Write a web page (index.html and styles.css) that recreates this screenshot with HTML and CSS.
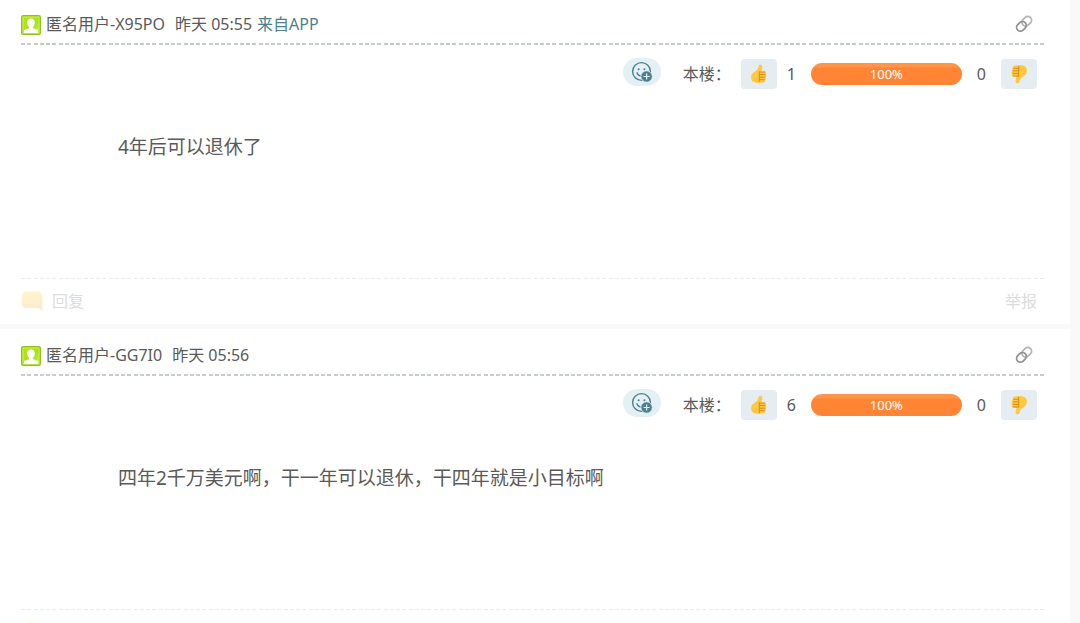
FILE: index.html
```html
<!DOCTYPE html>
<html lang="zh-CN">
<head>
    <meta charset="UTF-8">
    <title>论坛回帖</title>
    <link rel="stylesheet" href="styles.css">
</head>
<body>

    <!-- shared icons -->
    <svg class="sprite" aria-hidden="true">
        <defs>
            <linearGradient id="avatarBg" x1="0" y1="0" x2="1" y2="1">
                <stop offset="0" stop-color="#b9e51c"/>
                <stop offset="0.55" stop-color="#a8e310"/>
                <stop offset="1" stop-color="#c8f45a"/>
            </linearGradient>
            <linearGradient id="bubbleBg" x1="0" y1="0" x2="0" y2="1">
                <stop offset="0" stop-color="#fff4cc"/>
                <stop offset="1" stop-color="#fdebd2"/>
            </linearGradient>
            <symbol id="icon-avatar" viewBox="0 0 20 20">
                <rect x="0.75" y="0.75" width="18.5" height="18.5" rx="1.5" fill="url(#avatarBg)" stroke="#8fc31a" stroke-width="1.5"/>
                <rect x="2" y="2" width="16" height="16" fill="none" stroke="#d2f36a" stroke-width="0.8"/>
                <path d="M10 3.6c2.5 0 3.9 1.7 3.9 4.1 0 1.8-.9 3-1.8 4v1.5l4.9 1.9V18H3v-2.9l4.9-1.9v-1.5c-.9-1-1.8-2.2-1.8-4 0-2.4 1.4-4.1 3.9-4.1z" fill="#fff"/>
            </symbol>
            <symbol id="icon-link" viewBox="0 0 18 18">
                <g fill="none" stroke-width="1.8">
                    <rect x="6.5" y="2.5" width="10.5" height="7.6" rx="3.8" transform="rotate(-45 11.7 6.3)" stroke="#b5b5b5"/>
                    <rect x="1.2" y="7.6" width="10.5" height="7.6" rx="3.8" transform="rotate(-45 6.4 11.4)" stroke="#929292"/>
                </g>
            </symbol>
            <symbol id="icon-smile" viewBox="0 0 22 22">
                <circle cx="10.5" cy="10.5" r="8.9" fill="none" stroke="#4b818c" stroke-width="1.4"/>
                <circle cx="7.6" cy="8.2" r="1" fill="#4b818c"/>
                <circle cx="13.4" cy="8.2" r="1" fill="#4b818c"/>
                <path d="M6 11.8c.7 2 2.4 3.3 4.5 3.3" fill="none" stroke="#4b818c" stroke-width="1.4" stroke-linecap="round"/>
                <circle cx="15.6" cy="15.5" r="5.7" fill="#4b818c" stroke="#e3f0f4" stroke-width="0.8"/>
                <path d="M15.6 12.4v6.2M12.5 15.5h6.2" stroke="#e3f0f4" stroke-width="1.2"/>
            </symbol>
            <symbol id="icon-thumb" viewBox="0 0 18 20">
                <path d="M8.6 2.2C8.900.9 9.900.5 10.800.7c1.200.3 1.800 1.300 1.600 2.700-.2 1.500-.7 2.700-1.100 4h3.200c1.100 0 1.700.6 1.700 1.500 0 .6-.3 1-.6 1.300.5.3.8.800.8 1.400s-.3 1.100-.8 1.400c.3.300.4.700.4 1.100 0 .7-.4 1.200-.9 1.500.1.200.2.500.2.800 0 1.300-.8 1.900-2.100 2.100-3 .5-6.500.6-9-.2-2.100-.7-3.100-2.300-3.100-5 0-3.100 1.600-4.300 3.600-5.500C6.800 6.500 8.100 4.700 8.600 2.200z" fill="#ffc83d"/>
                <path d="M9.300 8v9.600M9.300 8h5.500M9.800 10.600h5.200M9.800 13.200h5M9.800 15.700h4.500" fill="none" stroke="#d98c1b" stroke-width="1" stroke-linecap="round"/>
            </symbol>
            <symbol id="icon-bubble" viewBox="0 0 22 20">
                <path d="M6 0.500h10c4 0 5.500 2 5.500 5v14l-4-2.500H6c-3.500 0-5.500-2-5.500-5V6C.5 2.500 2.500.5 6 .5z" fill="url(#bubbleBg)"/>
            </symbol>
        </defs>
    </svg>

    <main class="thread">
        <article class="post">
            <header class="post-header">
                <svg class="avatar" aria-hidden="true"><use href="#icon-avatar"/></svg>
                <span class="user">匿名用户-X95PO</span>
                <time class="time">昨天 05:55</time>
                <a class="source" href="#">来自APP</a>
                <a class="permalink" href="#" aria-label="链接"><svg aria-hidden="true"><use href="#icon-link"/></svg></a>
            </header>
            <div class="votes">
                <button type="button" class="react" aria-label="表情"><svg aria-hidden="true"><use href="#icon-smile"/></svg></button>
                <span class="votes-label">本楼：</span>
                <button type="button" class="vote" aria-label="赞"><svg aria-hidden="true"><use href="#icon-thumb"/></svg></button>
                <span class="count">1</span>
                <div class="bar"><div class="bar-fill" style="width: 100%">100%</div></div>
                <span class="count">0</span>
                <button type="button" class="vote down" aria-label="踩"><svg aria-hidden="true"><use href="#icon-thumb"/></svg></button>
            </div>
            <p class="message">4年后可以退休了</p>
            <footer class="post-footer">
                <a class="reply" href="#"><svg aria-hidden="true"><use href="#icon-bubble"/></svg>回复</a>
                <a href="#">举报</a>
            </footer>
        </article>

        <article class="post">
            <header class="post-header">
                <svg class="avatar" aria-hidden="true"><use href="#icon-avatar"/></svg>
                <span class="user">匿名用户-GG7I0</span>
                <time class="time">昨天 05:56</time>
                <a class="permalink" href="#" aria-label="链接"><svg aria-hidden="true"><use href="#icon-link"/></svg></a>
            </header>
            <div class="votes">
                <button type="button" class="react" aria-label="表情"><svg aria-hidden="true"><use href="#icon-smile"/></svg></button>
                <span class="votes-label">本楼：</span>
                <button type="button" class="vote" aria-label="赞"><svg aria-hidden="true"><use href="#icon-thumb"/></svg></button>
                <span class="count">6</span>
                <div class="bar"><div class="bar-fill" style="width: 100%">100%</div></div>
                <span class="count">0</span>
                <button type="button" class="vote down" aria-label="踩"><svg aria-hidden="true"><use href="#icon-thumb"/></svg></button>
            </div>
            <p class="message">四年2千万美元啊，干一年可以退休，干四年就是小目标啊</p>
            <footer class="post-footer">
                <a class="reply" href="#"><svg aria-hidden="true"><use href="#icon-bubble"/></svg>回复</a>
                <a href="#">举报</a>
            </footer>
        </article>
    </main>

</body>
</html>
```
FILE: styles.css
```css
* {
    box-sizing: border-box;
}

body {
    margin: 0;
    background-color: #f9f9f9;
    color: #5a5a5a;
    font-family: "Noto Sans", "Noto Sans CJK SC", sans-serif;
    font-size: 16px;
    line-height: 24px;
}

a {
    text-decoration: none;
}

button {
    display: flex;
    align-items: center;
    justify-content: center;
    padding: 0;
    border: none;
    cursor: pointer;
}

.sprite {
    position: absolute;
    width: 0;
    height: 0;
}

.thread {
    margin-top: -2px;
    margin-right: 10px;
}

.post {
    padding: 0 26px 0 21px;
    margin-bottom: 5px;
    background-color: #fff;
}

/* header and footer share the same dashed rule */
.post-header,
.post-footer {
    --dash: #c5cccc;
    display: flex;
    align-items: center;
    background-image: linear-gradient(90deg,
        var(--dash) 4px, transparent 4px 6px,
        var(--dash) 6px 10px, transparent 10px 13px,
        var(--dash) 13px 17px, transparent 17px 19px,
        var(--dash) 19px 23px, transparent 23px);
    background-repeat: repeat-x;
}

.post-header {
    height: 47px;
    padding: 4px 11px 0 0;
    background-size: 25px 2px;
    background-position: left bottom;
}

.avatar {
    width: 20px;
    height: 20px;
    margin-top: 2px;
    margin-right: 5px;
}

.time {
    margin-left: 10px;
}

.source {
    margin-left: 5px;
    color: #4b818c;
}

.permalink {
    margin-left: auto;
}

.permalink svg {
    display: block;
    width: 18px;
    height: 18px;
}

.votes {
    display: flex;
    align-items: center;
    justify-content: flex-end;
    padding: 13px 7px 0 0;
}

.react {
    width: 38px;
    height: 28px;
    margin-right: 22px;
    margin-bottom: 4px;
    border-radius: 14px;
    background-color: #e3f0f4;
}

.react svg {
    width: 22px;
    height: 22px;
}

.votes-label {
    margin-right: 10px;
}

.vote {
    width: 36px;
    height: 30px;
    border-radius: 4px;
    background-color: #e5ecf2;
}

.vote svg {
    width: 18px;
    height: 20px;
}

.down svg {
    transform: rotate(180deg);
}

.count {
    min-width: 9px;
    margin: 0 15px;
}

.vote + .count {
    margin-left: 10px;
}

.bar {
    width: 151px;
    border-radius: 11px;
    overflow: hidden;
}

.bar-fill {
    background: linear-gradient(#ff9548 4px, #ff8534 5px);
    color: #fff;
    font-size: 13px;
    line-height: 22px;
    text-align: center;
}

.message {
    min-height: 188px;
    margin: 0;
    padding: 42px 97px;
    font-size: 19px;
    line-height: 30px;
}

.post-footer {
    --dash: #ececec;
    justify-content: space-between;
    height: 46px;
    padding: 0 7px 0 0;
    background-size: 25px 1px;
    background-position: left top;
}

.post-footer a {
    color: #dcdcdc;
}

.reply {
    display: flex;
    align-items: center;
    gap: 9px;
}

.reply svg {
    width: 22px;
    height: 20px;
}
```
